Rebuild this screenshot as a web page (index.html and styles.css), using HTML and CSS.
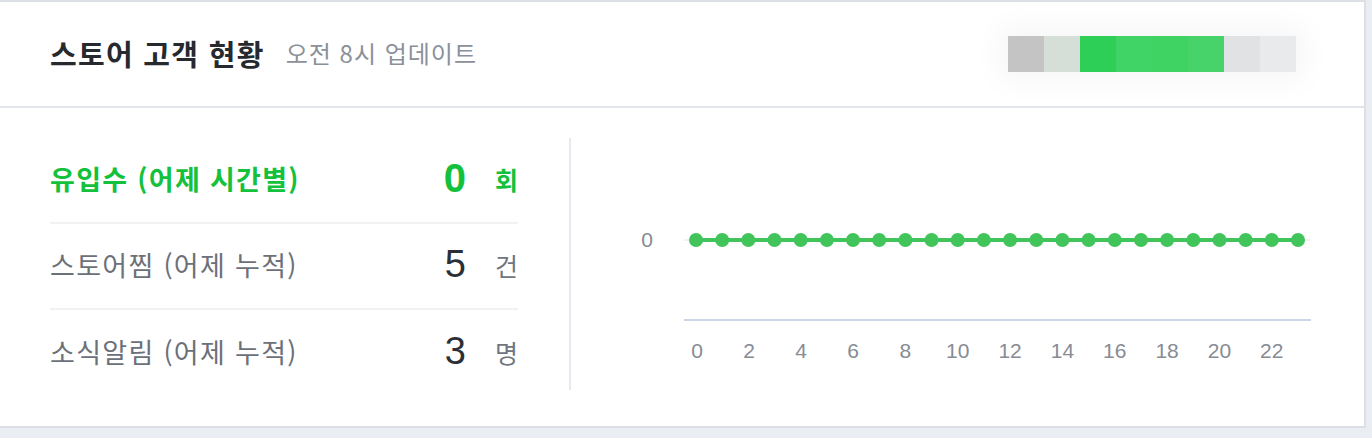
FILE: index.html
```html
<!DOCTYPE html>
<html lang="ko">
<head>
<meta charset="utf-8">
<link rel="stylesheet" href="styles.css">
</head>
<body>
<section class="card">
  <header class="card-head">
    <div class="titles">
      <h2 class="title">스토어 고객 현황</h2>
      <span class="sub">오전 8시 업데이트</span>
    </div>
    <div class="blur-bar">
      <span class="b b1"></span><span class="b b2"></span><span class="b b3"></span><span class="b b4"></span><span class="b b5"></span><span class="b b6"></span><span class="b b7"></span><span class="b b8"></span>
    </div>
  </header>
  <div class="card-body">
    <ul class="stats">
      <li class="stat active"><span class="label">유입수 (어제 시간별)</span><span class="num">0</span><span class="unit">회</span></li>
      <li class="stat"><span class="label">스토어찜 (어제 누적)</span><span class="num">5</span><span class="unit">건</span></li>
      <li class="stat"><span class="label">소식알림 (어제 누적)</span><span class="num">3</span><span class="unit">명</span></li>
    </ul>
    <div class="vdiv"></div>
    <div class="chart">
      <svg width="793" height="257" viewBox="0 0 793 257" xmlns="http://www.w3.org/2000/svg">
        <line x1="113" y1="102" x2="740" y2="102" stroke="#e4e4e4" stroke-width="1"/>
        <text class="ylab" x="76" y="109" text-anchor="middle">0</text>
        <line x1="113" y1="182" x2="740" y2="182" stroke="#cdd5e6" stroke-width="2"/>
        <line x1="125" y1="102" x2="727" y2="102" stroke="#41c55b" stroke-width="4"/>
        <g fill="#41c55b">
          <circle cx="125" cy="102" r="7"/><circle cx="151.2" cy="102" r="7"/><circle cx="177.3" cy="102" r="7"/><circle cx="203.5" cy="102" r="7"/>
          <circle cx="229.7" cy="102" r="7"/><circle cx="255.9" cy="102" r="7"/><circle cx="282" cy="102" r="7"/><circle cx="308.2" cy="102" r="7"/>
          <circle cx="334.4" cy="102" r="7"/><circle cx="360.6" cy="102" r="7"/><circle cx="386.7" cy="102" r="7"/><circle cx="412.9" cy="102" r="7"/>
          <circle cx="439.1" cy="102" r="7"/><circle cx="465.3" cy="102" r="7"/><circle cx="491.4" cy="102" r="7"/><circle cx="517.6" cy="102" r="7"/>
          <circle cx="543.8" cy="102" r="7"/><circle cx="570" cy="102" r="7"/><circle cx="596.1" cy="102" r="7"/><circle cx="622.3" cy="102" r="7"/>
          <circle cx="648.5" cy="102" r="7"/><circle cx="674.7" cy="102" r="7"/><circle cx="700.8" cy="102" r="7"/><circle cx="727" cy="102" r="7"/>
        </g>
        <g class="xlab" text-anchor="middle">
          <text x="126" y="220">0</text><text x="178" y="220">2</text><text x="230" y="220">4</text><text x="282" y="220">6</text>
          <text x="334.4" y="220">8</text><text x="386.7" y="220">10</text><text x="439.1" y="220">12</text><text x="491.4" y="220">14</text>
          <text x="543.8" y="220">16</text><text x="596.1" y="220">18</text><text x="648.5" y="220">20</text><text x="700.8" y="220">22</text>
        </g>
      </svg>
    </div>
  </div>
</section>
</body>
</html>
```
FILE: styles.css
```css
* { box-sizing: border-box; }
html, body { margin: 0; padding: 0; }
body {
  background: #eaedf2;
  font-family: "Noto Sans CJK KR", "Noto Sans", sans-serif;
  width: 1372px;
  height: 438px;
  overflow: hidden;
}
.card {
  width: 1366px;
  height: 428px;
  background: #fff;
  border-top: 2px solid #dcdfe4;
  border-right: 2px solid #dcdfe4;
  border-bottom: 2px solid #dcdfe4;
}
.card-head {
  height: 106px;
  border-bottom: 2px solid #e3e5ec;
  display: flex;
  align-items: center;
  justify-content: space-between;
  padding: 0 0 0 50px;
}
.titles {
  display: flex;
  align-items: center;
  gap: 21px;
  margin-top: -3px;
}
.title {
  margin: 0;
  font-size: 29px;
  font-weight: 700;
  color: #26292e;
  letter-spacing: 1.3px;
}
.sub {
  font-size: 24px;
  color: #8b909a;
  font-weight: 400;
  letter-spacing: 1px;
}
.blur-bar {
  display: flex;
  margin-right: 68px;
  margin-top: -1px;
  box-shadow: 0 0 28px 10px rgba(0,0,0,0.035);
  filter: blur(0.5px);
}
.b { width: 36px; height: 36px; display: block; }
.b1 { background: #c4c4c4; }
.b2 { background: #d5dfd7; }
.b3 { background: #2dcf56; }
.b4 { background: #40d466; }
.b5 { background: #3fd364; }
.b6 { background: #48d36a; }
.b7 { background: #e1e2e4; }
.b8 { background: #e9eaec; }

.card-body {
  display: flex;
  padding: 30px 0 0 0;
}
.stats {
  list-style: none;
  margin: 0 0 0 50px;
  padding: 0;
  width: 468px;
}
.stat {
  display: flex;
  align-items: center;
  height: 86px;
  padding-bottom: 3px;
  border-bottom: 2px solid #f1f2f4;
  color: #6b7079;
}
.stat:last-child { border-bottom: 0; height: 86px; }
.label {
  flex: 1;
  font-size: 27px;
  letter-spacing: 1.3px;
}
.num {
  font-family: "Liberation Sans", Arial, sans-serif;
  font-size: 38px;
  color: #2b2f36;
  width: 26px;
  text-align: right;
}
.unit {
  width: 52px;
  text-align: right;
  font-size: 25px;
  color: #70757e;
}
.stat.active .label { color: #14c13c; font-weight: 700; }
.stat.active .num { color: #14c13c; font-weight: 700; font-size: 40px; }
.stat.active .unit { color: #14c13c; font-weight: 700; }

.vdiv {
  width: 2px;
  height: 252px;
  background: #e6e9f0;
  margin-left: 51px;
}
.chart { width: 793px; height: 257px; }
.chart svg { display: block; }
.ylab, .xlab text {
  font-family: "Liberation Sans", Arial, sans-serif;
  font-size: 21px;
  fill: #878b94;
}
```
